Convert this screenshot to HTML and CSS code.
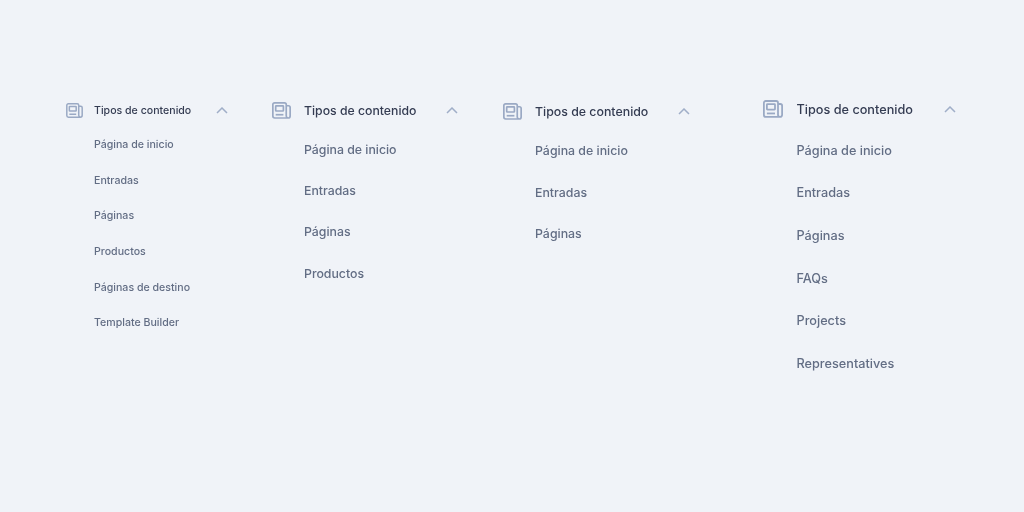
FILE: index.html
```html
<!DOCTYPE html>
<html lang="es">
<head>
    <meta charset="UTF-8">
    <title>Tipos de contenido</title>
    <link rel="stylesheet" href="styles.css">
</head>
<body>
    <main class="page">
        <section class="menu menu-one">
            <div class="menu-head">
                <svg class="menu-icon" viewBox="0 0 18 16" fill="none" stroke="currentColor" stroke-width="1.6"><path d="M13.5 3.500H15.600a1.600 1.600 0 0 1 1.600 1.600v8a2 2 0 0 1-2 2H2.600A1.800 1.800 0 0 1 .8 13.300V2.400A1.600 1.600 0 0 1 2.400.8h9.500a1.600 1.600 0 0 1 1.600 1.600v10.700a2 2 0 0 0 1.700 2"/><rect x="3.500" y="3.600" width="7.300" height="4.900" rx=".5"/><path d="M3.500 12h7.300"/></svg>
                <span class="menu-title">Tipos de contenido</span>
                <svg class="menu-chevron" viewBox="0 0 12 7" fill="none" stroke="currentColor" stroke-width="1.5"><path d="M1 6l5-5 5 5"/></svg>
            </div>
            <ul class="menu-list">
                <li>Página de inicio</li>
                <li>Entradas</li>
                <li>Páginas</li>
                <li>Productos</li>
                <li>Páginas de destino</li>
                <li>Template Builder</li>
            </ul>
        </section>

        <section class="menu menu-two">
            <div class="menu-head">
                <svg class="menu-icon" viewBox="0 0 18 16" fill="none" stroke="currentColor" stroke-width="1.6"><path d="M13.5 3.500H15.600a1.600 1.600 0 0 1 1.600 1.600v8a2 2 0 0 1-2 2H2.600A1.800 1.800 0 0 1 .8 13.300V2.400A1.600 1.600 0 0 1 2.400.8h9.500a1.600 1.600 0 0 1 1.600 1.600v10.700a2 2 0 0 0 1.700 2"/><rect x="3.500" y="3.600" width="7.300" height="4.900" rx=".5"/><path d="M3.500 12h7.300"/></svg>
                <span class="menu-title">Tipos de contenido</span>
                <svg class="menu-chevron" viewBox="0 0 12 7" fill="none" stroke="currentColor" stroke-width="1.5"><path d="M1 6l5-5 5 5"/></svg>
            </div>
            <ul class="menu-list">
                <li>Página de inicio</li>
                <li>Entradas</li>
                <li>Páginas</li>
                <li>Productos</li>
            </ul>
        </section>

        <section class="menu menu-three">
            <div class="menu-head">
                <svg class="menu-icon" viewBox="0 0 18 16" fill="none" stroke="currentColor" stroke-width="1.6"><path d="M13.5 3.500H15.600a1.600 1.600 0 0 1 1.600 1.600v8a2 2 0 0 1-2 2H2.600A1.800 1.800 0 0 1 .8 13.300V2.400A1.600 1.600 0 0 1 2.400.8h9.500a1.600 1.600 0 0 1 1.600 1.600v10.700a2 2 0 0 0 1.700 2"/><rect x="3.500" y="3.600" width="7.300" height="4.900" rx=".5"/><path d="M3.500 12h7.300"/></svg>
                <span class="menu-title">Tipos de contenido</span>
                <svg class="menu-chevron" viewBox="0 0 12 7" fill="none" stroke="currentColor" stroke-width="1.5"><path d="M1 6l5-5 5 5"/></svg>
            </div>
            <ul class="menu-list">
                <li>Página de inicio</li>
                <li>Entradas</li>
                <li>Páginas</li>
            </ul>
        </section>

        <section class="menu menu-four">
            <div class="menu-head">
                <svg class="menu-icon" viewBox="0 0 18 16" fill="none" stroke="currentColor" stroke-width="1.6"><path d="M13.5 3.500H15.600a1.600 1.600 0 0 1 1.600 1.600v8a2 2 0 0 1-2 2H2.600A1.800 1.800 0 0 1 .8 13.300V2.400A1.600 1.600 0 0 1 2.400.8h9.500a1.600 1.600 0 0 1 1.600 1.600v10.700a2 2 0 0 0 1.700 2"/><rect x="3.500" y="3.600" width="7.300" height="4.900" rx=".5"/><path d="M3.500 12h7.300"/></svg>
                <span class="menu-title">Tipos de contenido</span>
                <svg class="menu-chevron" viewBox="0 0 12 7" fill="none" stroke="currentColor" stroke-width="1.5"><path d="M1 6l5-5 5 5"/></svg>
            </div>
            <ul class="menu-list">
                <li>Página de inicio</li>
                <li>Entradas</li>
                <li>Páginas</li>
                <li>FAQs</li>
                <li>Projects</li>
                <li>Representatives</li>
            </ul>
        </section>
    </main>
</body>
</html>
```

FILE: styles.css
```css
* {
    margin: 0;
    padding: 0;
    box-sizing: border-box;
    font-family: 'Inter', 'Liberation Sans', sans-serif;
}

html, body {
    height: 100%;
    overflow: hidden;
}

body {
    background-color: #f0f3f8;
}

/* the reference is a soft, upscaled capture */
.page {
    display: flex;
    align-items: flex-start;
    padding-left: 66px;
    filter: blur(0.35px);
}

.menu-head {
    display: flex;
    align-items: center;
    height: 20px;
}

.menu-title {
    font-weight: 500;
    color: #343c52;
    white-space: nowrap;
}

.menu-icon {
    color: #9aa9c4;
    flex: none;
}

.menu-chevron {
    color: #a0aec8;
    width: 12px;
    height: 7px;
    flex: none;
    margin-left: auto;
}

.menu-list {
    list-style: none;
    color: #626d84;
    font-weight: 500;
}

.menu-list li {
    white-space: nowrap;
}

/* each column is the same menu at a different scale */
.menu-one {
    width: 206px;
    margin-top: 100px;
    font-size: 10.600px;
}

.menu-one .menu-head {
    width: 162px;
}

.menu-one .menu-icon {
    width: 17px;
    height: 15px;
    margin-right: 11px;
}

.menu-one .menu-list {
    padding: 15px 0 0 28px;
    font-size: 10.600px;
}

.menu-one .menu-list li {
    height: 35.700px;
    line-height: 20px;
}

.menu-two {
    width: 231px;
    margin-top: 100px;
    font-size: 12.250px;
}

.menu-two .menu-head {
    width: 186px;
}

.menu-two .menu-icon {
    width: 19px;
    height: 17px;
    margin-right: 13px;
}

.menu-two .menu-list {
    padding: 19.500px 0 0 32px;
    font-size: 12.300px;
}

.menu-two .menu-list li {
    height: 41.400px;
    line-height: 20px;
}

.menu-three {
    width: 260px;
    margin-top: 101px;
    font-size: 12.350px;
}

.menu-three .menu-head {
    width: 187px;
}

.menu-three .menu-icon {
    width: 19px;
    height: 17px;
    margin-right: 13px;
}

.menu-three .menu-list {
    padding: 20px 0 0 32px;
}

.menu-three .menu-list li {
    height: 41.500px;
    line-height: 20px;
}

.menu-four {
    width: 200px;
    margin-top: 99px;
    font-size: 12.700px;
}

.menu-four .menu-head {
    width: 193px;
}

.menu-four .menu-icon {
    width: 20px;
    height: 18px;
    margin-right: 13.500px;
}

.menu-four .menu-list {
    padding: 21.600px 0 0 33.500px;
}

.menu-four .menu-list li {
    height: 42.700px;
    line-height: 20px;
}
```
